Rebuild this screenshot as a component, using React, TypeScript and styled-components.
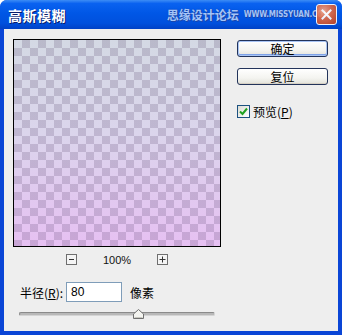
import styled, { createGlobalStyle } from 'styled-components';

const GlobalStyle = createGlobalStyle`
  html, body {
    margin: 0;
    padding: 0;
    background: #ffffff;
  }
  body {
    font-family: "Noto Sans CJK SC", "Liberation Sans", sans-serif;
    font-size: 12px;
    color: #000;
  }
`;

const Window = styled.div`
  width: 342px;
  height: 335px;
  box-sizing: border-box;
  display: flex;
  flex-direction: column;
  background: #0a45d6;
  border-radius: 7px 7px 0 0;
  overflow: hidden;
`;

const TitleBar = styled.div`
  height: 29px;
  flex: none;
  display: flex;
  align-items: center;
  padding: 0 5px 0 8px;
  background: linear-gradient(
    #3d8df5 0%,
    #0a62f0 12%,
    #0057e6 45%,
    #0050dd 80%,
    #0041c6 100%
  );
`;

const Title = styled.span`
  color: #fff;
  font-weight: 700;
  font-size: 14px;
  letter-spacing: 0.5px;
  text-shadow: 1px 1px 0 #0a1e6a;
`;

const Watermark = styled.span`
  margin-left: auto;
  display: flex;
  align-items: center;
  gap: 5px;
  color: #a4c4f8;
  text-shadow: 0 0 1px #1a3f9c, 1px 1px 0 #1b48b0;
`;

const WatermarkCn = styled.span`
  font-size: 12px;
  font-weight: 700;
`;

const WatermarkUrl = styled.span`
  font-family: "DejaVu Sans Condensed", "Liberation Sans", sans-serif;
  font-size: 8px;
  font-weight: 700;
  letter-spacing: -0.2px;
  margin-right: -14px;
`;

const CloseButton = styled.div`
  width: 21px;
  height: 21px;
  box-sizing: border-box;
  border: 1px solid #fff;
  border-radius: 3px;
  background: radial-gradient(circle at 35% 30%, #f2a68a 0%, #e06a44 45%, #c23f18 100%);
  opacity: 0.92;
  display: flex;
  align-items: center;
  justify-content: center;
  position: relative;
  z-index: 1;
`;

const Body = styled.div`
  flex: 1;
  margin: 0 4px 4px 4px;
  background: #eeeeee;
  padding: 10px 9px 0 9px;
  display: flex;
  flex-direction: column;
`;

const Top = styled.div`
  display: flex;
  gap: 16px;
`;

const LeftCol = styled.div`
  display: flex;
  flex-direction: column;
`;

const Preview = styled.div`
  width: 208px;
  height: 208px;
  box-sizing: border-box;
  border: 1px solid #000;
  background:
    repeating-conic-gradient(rgba(70, 50, 90, 0.19) 0 25%, transparent 0 50%) 0 0 / 16px 16px,
    linear-gradient(#d4d9e4 0%, #dbd5ec 45%, #e6c0f2 100%);
`;

const ZoomRow = styled.div`
  display: flex;
  align-items: center;
  height: 11px;
  margin-top: 7px;
  padding-left: 53px;
`;

const ZoomBox = styled.div`
  width: 11px;
  height: 11px;
  box-sizing: border-box;
  border: 1px solid #6e6e6e;
  background: #f4f4f4;
  display: flex;
  align-items: center;
  justify-content: center;
`;

const ZoomText = styled.span`
  font-family: "Liberation Sans", sans-serif;
  font-size: 11px;
  width: 80px;
  text-align: center;
  color: #111;
`;

const RightCol = styled.div`
  display: flex;
  flex-direction: column;
  padding-top: 1px;
`;

const Button = styled.div<{ $default?: boolean }>`
  width: 91px;
  height: 17px;
  box-sizing: border-box;
  border: 1px solid #22335a;
  border-radius: 3px;
  background: linear-gradient(#ffffff 0%, #f4f4f0 60%, #e2e2da 100%);
  box-shadow: ${(p) =>
    p.$default ? 'inset 0 0 0 1px #a8c4f4, inset 0 -1px 0 1px #7ea2e8' : 'inset 0 -1px 0 #d6d0c4'};
  display: flex;
  align-items: center;
  justify-content: center;
  font-size: 12px;
  line-height: 1;
  margin-bottom: 11px;
`;

const CheckRow = styled.label`
  display: flex;
  align-items: center;
  gap: 3px;
  margin-top: 7px;
  font-size: 12px;
`;

const CheckBox = styled.span`
  width: 13px;
  height: 13px;
  box-sizing: border-box;
  border: 1px solid #1c5180;
  background: linear-gradient(135deg, #dcdcd4, #ffffff);
  display: flex;
  align-items: center;
  justify-content: center;
`;

const Under = styled.span`
  text-decoration: underline;
`;

const RadiusRow = styled.div`
  display: flex;
  align-items: center;
  margin-top: 17px;
  padding-left: 7px;
`;

const Input = styled.div`
  width: 56px;
  height: 20px;
  box-sizing: border-box;
  border: 1px solid #7f9db9;
  background: #fff;
  margin: 0 8px 0 3px;
  padding-left: 4px;
  display: flex;
  align-items: center;
  font-family: "Liberation Sans", sans-serif;
  font-size: 12px;
`;

const SliderWrap = styled.div`
  position: relative;
  width: 196px;
  height: 12px;
  margin: 6px 0 0 6px;
  display: flex;
  align-items: center;
`;

const Track = styled.div`
  width: 100%;
  height: 4px;
  box-sizing: border-box;
  border: 1px solid #8a8a8a;
  border-bottom-color: #d4d4d4;
  border-right-color: #d4d4d4;
  border-radius: 2px;
  background: #b8b8b8;
`;

const Thumb = styled.svg`
  position: absolute;
  left: 114px;
  top: 1px;
`;

export default function App() {
  return (
    <>
      <GlobalStyle />
      <Window>
        <TitleBar>
          <Title>高斯模糊</Title>
          <Watermark>
            <WatermarkCn>思缘设计论坛</WatermarkCn>
            <WatermarkUrl>WWW.MISSYUAN.COM</WatermarkUrl>
          </Watermark>
          <CloseButton>
            <svg width="11" height="11" viewBox="0 0 11 11">
              <path d="M1.5 1.5 L9.5 9.5 M9.5 1.5 L1.5 9.5" stroke="#fff" strokeWidth="2" strokeLinecap="square" />
            </svg>
          </CloseButton>
        </TitleBar>
        <Body>
          <Top>
            <LeftCol>
              <Preview />
              <ZoomRow>
                <ZoomBox>
                  <svg width="7" height="7" viewBox="0 0 7 7">
                    <path d="M1 3.5 H6" stroke="#333" strokeWidth="1" />
                  </svg>
                </ZoomBox>
                <ZoomText>100%</ZoomText>
                <ZoomBox>
                  <svg width="7" height="7" viewBox="0 0 7 7">
                    <path d="M0.5 3.5 H6.5 M3.5 0.5 V6.5" stroke="#333" strokeWidth="1" />
                  </svg>
                </ZoomBox>
              </ZoomRow>
            </LeftCol>
            <RightCol>
              <Button $default>确定</Button>
              <Button>复位</Button>
              <CheckRow>
                <CheckBox>
                  <svg width="9" height="9" viewBox="0 0 9 9">
                    <path d="M1 4.5 L3.5 7 L8 1.5" stroke="#21a121" strokeWidth="2" fill="none" />
                  </svg>
                </CheckBox>
                <span>
                  预览(<Under>P</Under>)
                </span>
              </CheckRow>
            </RightCol>
          </Top>
          <RadiusRow>
            <span>
              半径(<Under>R</Under>):
            </span>
            <Input>80</Input>
            <span>像素</span>
          </RadiusRow>
          <SliderWrap>
            <Track />
            <Thumb width="11" height="10" viewBox="0 0 11 10">
              <path d="M5.5 0.5 L10.5 5 V9.5 H0.5 V5 Z" fill="#f4f4f0" stroke="#707070" />
              <path d="M1.5 8.5 H9.5" stroke="#c8c8c0" />
            </Thumb>
          </SliderWrap>
        </Body>
      </Window>
    </>
  );
}
